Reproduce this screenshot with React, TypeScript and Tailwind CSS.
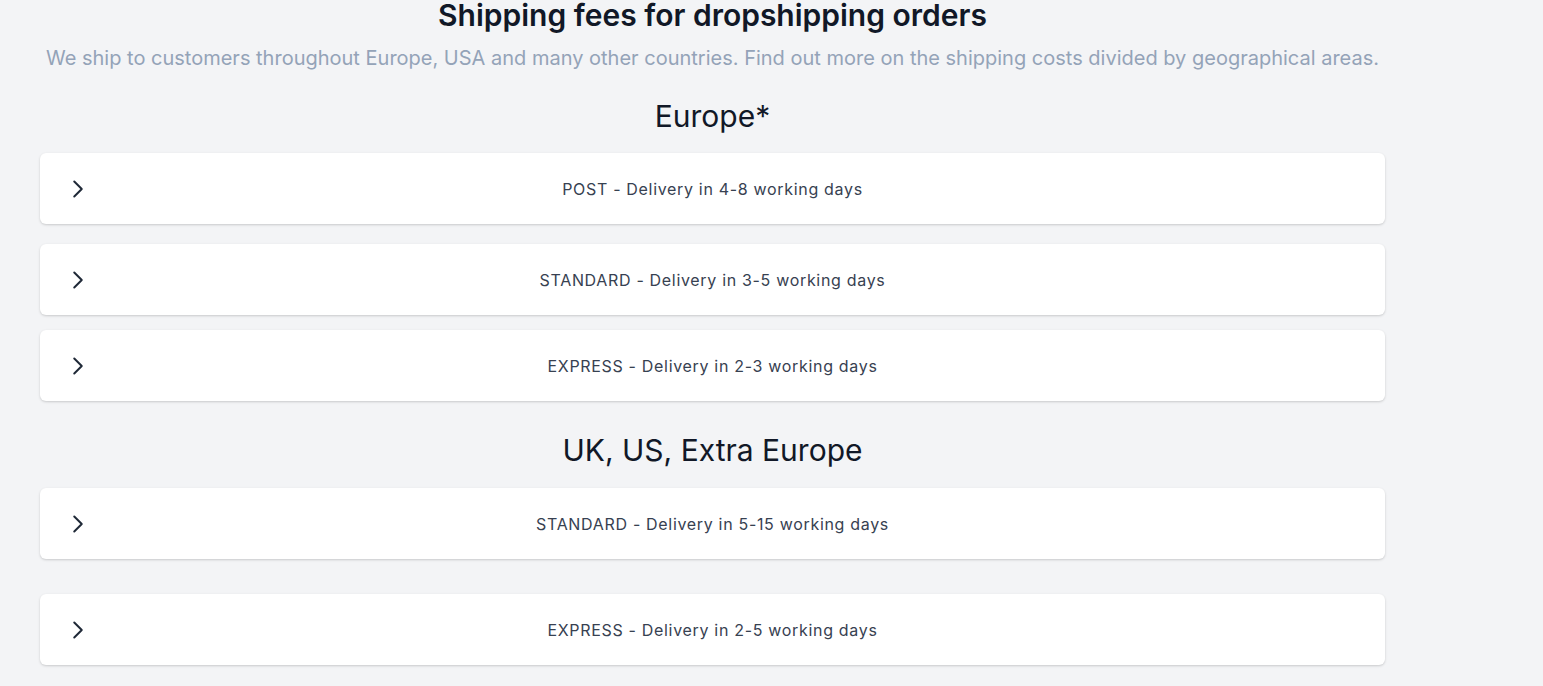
import React from "react";

function Chevron() {
  return (
    <svg
      className="h-6 w-6 shrink-0 text-[#1f2937]"
      viewBox="0 0 24 24"
      fill="none"
      stroke="currentColor"
      strokeWidth={2}
    >
      <path strokeLinecap="round" strokeLinejoin="round" d="m8.25 4.5 7.5 7.5-7.5 7.5" />
    </svg>
  );
}

function ShippingRow({ label, className = "" }: { label: string; className?: string }) {
  return (
    <div
      className={`flex h-[71px] items-center rounded-md bg-white px-[26px] shadow-[0_1px_3px_rgba(0,0,0,0.12),0_1px_2px_rgba(0,0,0,0.06)] ${className}`}
    >
      <Chevron />
      <span className="flex-1 text-center text-base tracking-[0.68px] text-[#374151]">{label}</span>
      <span className="w-6 shrink-0" />
    </div>
  );
}

export default function App() {
  return (
    <div
      className="min-h-screen bg-[#f3f4f6] pb-6"
      style={{ fontFamily: "Inter, 'Noto Sans', sans-serif" }}
    >
      <div className="ml-10 w-[1345px]">
        <h1 className="-mt-[3px] text-center text-3xl leading-9 font-semibold text-[#111827]">
          Shipping fees for dropshipping orders
        </h1>
        <p className="mt-[11px] text-center text-xl leading-7 text-[#94a3b8]">
          We ship to customers throughout Europe, USA and many other countries. Find out more on the shipping costs divided by geographical areas.
        </p>

        {/* Europe */}
        <h2 className="mt-[26px] text-center text-3xl leading-9 font-normal text-[#111827]">
          Europe*
        </h2>
        <ShippingRow className="mt-[19px]" label="POST - Delivery in 4-8 working days" />
        <ShippingRow className="mt-[20px]" label="STANDARD - Delivery in 3-5 working days" />
        <ShippingRow className="mt-[15px]" label="EXPRESS - Delivery in 2-3 working days" />

        {/* Rest of world */}
        <h2 className="mt-[31px] text-center text-3xl leading-9 font-normal text-[#111827]">
          UK, US, Extra Europe
        </h2>
        <ShippingRow className="mt-[20px]" label="STANDARD - Delivery in 5-15 working days" />
        <ShippingRow className="mt-[35px]" label="EXPRESS - Delivery in 2-5 working days" />
      </div>
    </div>
  );
}
